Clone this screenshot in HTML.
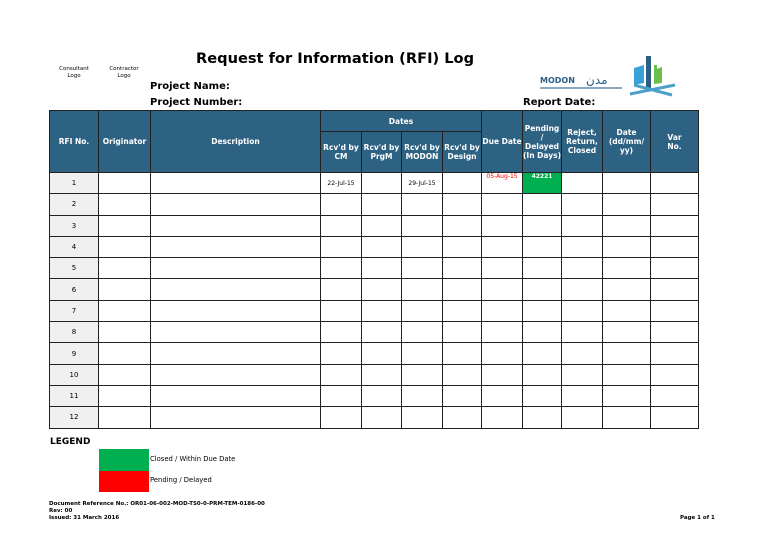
<!DOCTYPE html>
<html><head><meta charset="utf-8"><style>
body{margin:0;width:768px;height:543px;background:#fff;position:relative;font-family:"DejaVu Sans","Liberation Sans",sans-serif;overflow:hidden}
.a{position:absolute}
table{position:absolute;left:49px;top:110px;border-collapse:collapse;table-layout:fixed}
td{border:1px solid #222;padding:0;text-align:center;font-size:7px;color:#000}
.h{background:#2e6283;color:#fff;font-weight:bold;font-size:7.5px;line-height:9px}
.n{background:#f0f0f0}
.b{font-weight:bold}
</style></head><body>
<div class="a" style="left:52px;top:66px;width:44px;text-align:center;font-size:5.5px;line-height:7px">Consultant<br>Logo</div>
<div class="a" style="left:102px;top:66px;width:44px;text-align:center;font-size:5.5px;line-height:7px">Contractor<br>Logo</div>
<div class="a b" style="left:196px;top:50px;font-size:14.6px">Request for Information (RFI) Log</div>
<div class="a b" style="left:150px;top:81px;font-size:10px">Project Name:</div>
<div class="a b" style="left:150px;top:97px;font-size:10px">Project Number:</div>
<div class="a b" style="left:523px;top:97px;font-size:10px">Report Date:</div>
<svg class="a" style="left:530px;top:52px" width="155" height="45">
<text x="10" y="31" font-size="8" font-weight="bold" fill="#2a5f86" font-family="DejaVu Sans">MODON</text>
<text x="56" y="32" font-size="12" fill="#2a5f86" font-family="DejaVu Sans">مدن</text>
<rect x="10" y="35" width="82" height="2" fill="#8aa8c0"/>
<path d="M104 16 l10 -3 v18 l-10 2z" fill="#3aa0d8"/>
<rect x="116" y="4" width="5" height="32" fill="#2a5f86"/>
<path d="M124 18 l8 -3 v16 l-8 1z" fill="#6ac04a"/>
<rect x="124" y="13" width="3" height="6" fill="#6ac04a"/>
<path d="M100 42 L145 33 M104 33 L142 43" stroke="#4aa0c8" stroke-width="3"/>
</svg>
<table>
<colgroup><col width="49"><col width="52"><col width="170"><col width="41"><col width="40"><col width="41"><col width="39"><col width="41"><col width="39"><col width="41"><col width="48"><col width="48"></colgroup>
<tr style="height:21px"><td class="h" rowspan="2">RFI No.</td><td class="h" rowspan="2">Originator</td><td class="h" rowspan="2">Description</td><td class="h" colspan="4">Dates</td><td class="h" rowspan="2">Due Date</td><td class="h" rowspan="2">Pending<br>/<br>Delayed<br>(In Days)</td><td class="h" rowspan="2">Reject,<br>Return,<br>Closed</td><td class="h" rowspan="2">Date<br>(dd/mm/<br>yy)</td><td class="h" rowspan="2">Var<br>No.</td></tr>
<tr style="height:41px"><td class="h">Rcv'd by<br>CM</td><td class="h">Rcv'd by<br>PrgM</td><td class="h">Rcv'd by<br>MODON</td><td class="h">Rcv'd by<br>Design</td></tr>
<tr style="height:21.3px"><td class="n">1</td><td></td><td></td><td style="font-size:6px">22-Jul-15</td><td></td><td style="font-size:6px">29-Jul-15</td><td></td><td style="color:#f00;font-size:6px;vertical-align:top">05-Aug-15</td><td style="background:#00b050;color:#fff;font-weight:bold;font-size:6px;vertical-align:top">42221</td><td></td><td></td><td></td></tr>
<tr style="height:21.3px"><td class="n">2</td><td></td><td></td><td></td><td></td><td></td><td></td><td></td><td></td><td></td><td></td><td></td></tr>
<tr style="height:21.3px"><td class="n">3</td><td></td><td></td><td></td><td></td><td></td><td></td><td></td><td></td><td></td><td></td><td></td></tr>
<tr style="height:21.3px"><td class="n">4</td><td></td><td></td><td></td><td></td><td></td><td></td><td></td><td></td><td></td><td></td><td></td></tr>
<tr style="height:21.3px"><td class="n">5</td><td></td><td></td><td></td><td></td><td></td><td></td><td></td><td></td><td></td><td></td><td></td></tr>
<tr style="height:21.3px"><td class="n">6</td><td></td><td></td><td></td><td></td><td></td><td></td><td></td><td></td><td></td><td></td><td></td></tr>
<tr style="height:21.3px"><td class="n">7</td><td></td><td></td><td></td><td></td><td></td><td></td><td></td><td></td><td></td><td></td><td></td></tr>
<tr style="height:21.3px"><td class="n">8</td><td></td><td></td><td></td><td></td><td></td><td></td><td></td><td></td><td></td><td></td><td></td></tr>
<tr style="height:21.3px"><td class="n">9</td><td></td><td></td><td></td><td></td><td></td><td></td><td></td><td></td><td></td><td></td><td></td></tr>
<tr style="height:21.3px"><td class="n">10</td><td></td><td></td><td></td><td></td><td></td><td></td><td></td><td></td><td></td><td></td><td></td></tr>
<tr style="height:21.3px"><td class="n">11</td><td></td><td></td><td></td><td></td><td></td><td></td><td></td><td></td><td></td><td></td><td></td></tr>
<tr style="height:21.3px"><td class="n">12</td><td></td><td></td><td></td><td></td><td></td><td></td><td></td><td></td><td></td><td></td><td></td></tr>
</table>
<div class="a b" style="left:50px;top:437px;font-size:9px">LEGEND</div>
<div class="a" style="left:99px;top:449px;width:50px;height:22px;background:#00b050"></div>
<div class="a" style="left:99px;top:471px;width:50px;height:21px;background:#f00"></div>
<div class="a" style="left:150px;top:455px;font-size:6.8px">Closed / Within Due Date</div>
<div class="a" style="left:150px;top:476px;font-size:6.8px">Pending / Delayed</div>
<div class="a b" style="left:49px;top:501px;font-size:5.5px;line-height:7px">Document Reference No.: OR01-06-002-MOD-TS0-0-PRM-TEM-0186-00<br>Rev: 00<br>Issued: 31 March 2016</div>
<div class="a b" style="left:680px;top:515px;font-size:5.5px">Page 1 of 1</div>
</body></html>
